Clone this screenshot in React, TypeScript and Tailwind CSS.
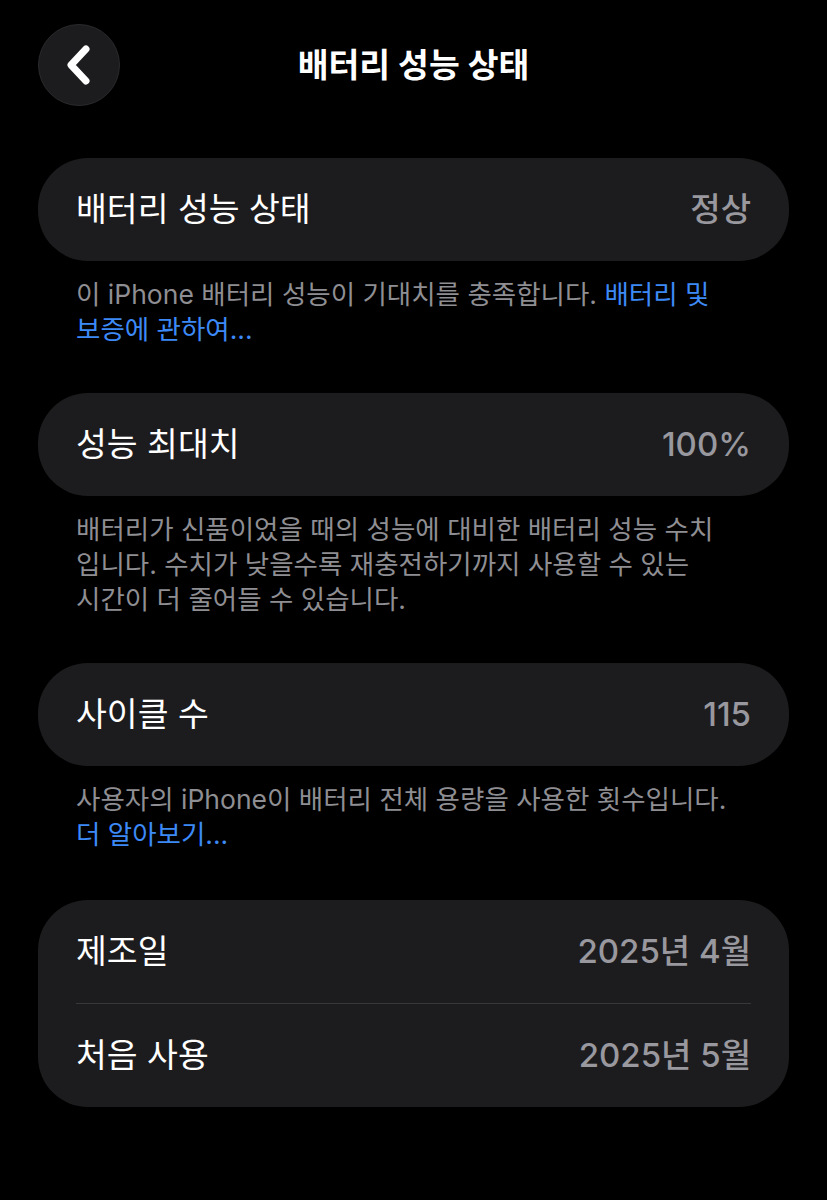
import React from 'react';

const font = { fontFamily: 'Inter, "Noto Sans CJK KR", "Noto Sans", sans-serif' };

const Row = ({ label, value }: { label: string; value: string }) => (
  <div className="flex h-[103px] items-center justify-between px-[38px]">
    <span className="text-[33.5px] text-white">{label}</span>
    <span className="text-[33px] font-medium text-[#98989e]">{value}</span>
  </div>
);

const Footer = ({ children }: { children: React.ReactNode }) => (
  <p className="px-[38px] pt-[16px] text-[26.5px] leading-[35px] text-[#8e8e93]">{children}</p>
);

export default function App() {
  return (
    <div className="min-h-[1200px] w-[827px] bg-black" style={font}>
      {/* header */}
      <header className="relative flex h-[130px] items-start justify-center pt-[24px]">
        <button className="absolute left-[38px] top-[24px] flex h-[82px] w-[82px] items-center justify-center rounded-full border border-[#2a2a2c] bg-[#1c1c1e]">
          <svg width="30" height="42" viewBox="0 0 30 42" fill="none">
            <path d="M22 5 L7 21 L22 37" stroke="white" strokeWidth="7" strokeLinecap="round" strokeLinejoin="round" />
          </svg>
        </button>
        <h1 className="flex h-[82px] items-center text-[33.5px] font-bold text-white">배터리 성능 상태</h1>
      </header>

      <main className="px-[38px] pt-[28px]">
        <section className="rounded-[50px] bg-[#1c1c1e]">
          <Row label="배터리 성능 상태" value="정상" />
        </section>
        <Footer>
          이 iPhone 배터리 성능이 기대치를 충족합니다. <span className="text-[#3d8af7]">배터리 및</span>
          <br />
          <span className="text-[#3d8af7]">보증에 관하여...</span>
        </Footer>

        <section className="mt-[46px] rounded-[50px] bg-[#1c1c1e]">
          <Row label="성능 최대치" value="100%" />
        </section>
        <Footer>
          배터리가 신품이었을 때의 성능에 대비한 배터리 성능 수치
          <br />
          입니다. 수치가 낮을수록 재충전하기까지 사용할 수 있는
          <br />
          시간이 더 줄어들 수 있습니다.
        </Footer>

        <section className="mt-[46px] rounded-[50px] bg-[#1c1c1e]">
          <Row label="사이클 수" value="115" />
        </section>
        <Footer>
          사용자의 iPhone이 배터리 전체 용량을 사용한 횟수입니다.
          <br />
          <span className="text-[#3d8af7]">더 알아보기...</span>
        </Footer>

        <section className="mt-[48px] rounded-[50px] bg-[#1c1c1e]">
          <Row label="제조일" value="2025년 4월" />
          <div className="mx-[38px] h-px bg-[#38383a]" />
          <Row label="처음 사용" value="2025년 5월" />
        </section>
      </main>
    </div>
  );
}
